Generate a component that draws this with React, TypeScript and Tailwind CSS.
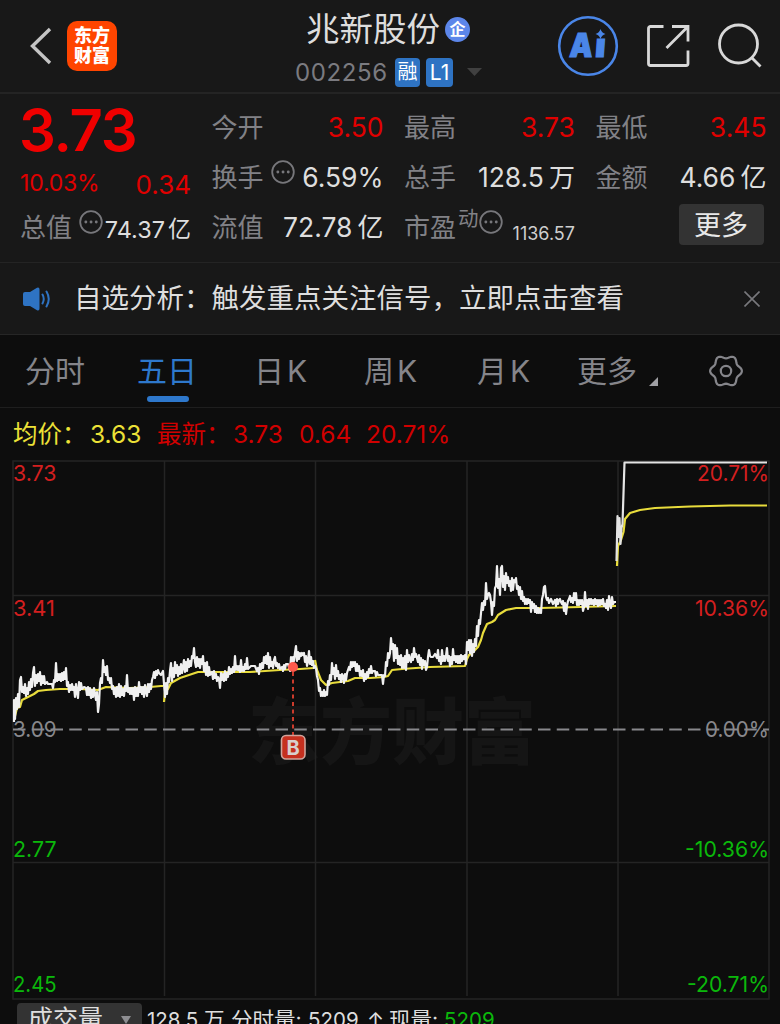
import type { ReactNode } from "react";
import clsx from "clsx";

type Tone = "up" | "plain";

interface QuoteCellProps {
  label: string;
  value: string;
  tone?: Tone;
  unit?: string;
  hint?: boolean;
}

const toneColors: Record<Tone, string> = {
  up: "text-[#e00000]",
  plain: "text-[#dedede]",
};

const tabs = [
  { name: "分时", className: "ml-[25px] w-[61px]" },
  { name: "五日", className: "ml-[51px] w-[61px]", active: true },
  { name: "日", suffix: "K", className: "ml-[56px] w-[54px]" },
  { name: "周", suffix: "K", className: "ml-[56px] w-[54px]" },
  { name: "月", suffix: "K", className: "ml-[59px] w-[54px]" },
  { name: "更多", className: "ml-[46px] w-[61px]" },
];

const axisLabels = [
  { y: 481, price: "3.73", pct: "20.71%", fill: "#d31f1f", width: 72 },
  { y: 616, price: "3.41", pct: "10.36%", fill: "#d31f1f", width: 74 },
  { y: 737, price: "3.09", pct: "0.00%", fill: "#88888c", width: 64 },
  { y: 857, price: "2.77", pct: "-10.36%", fill: "#0bb80b", width: 84 },
  { y: 992, price: "2.45", pct: "-20.71%", fill: "#0bb80b", width: 82 },
];

const priceEarly =
  "14,722 14,700 15,719 16,698 17,709 18,694 19,707 20,680 21,677 22,692 23,687 24,693 25,684 26,696 27,688 28,694 29,682 30,690 31,679 32,687 33,673 34,667 35,686 36,675 37,683 38,674 39,681 40,672 41,685 42,676 43,683 44,676 45,684 47,682 48,684 52,684 53,688 54,680 55,682 56,663 57,681 58,674 59,680 60,674 61,681 62,673 63,680 64,672 65,679 66,668 67,686 68,682 69,692 70,685 71,690 72,684 73,690 74,687 75,697 76,684 77,692 78,698 79,682 80,690 81,683 82,689 84,687 86,688 87,695 88,687 89,695 90,688 91,698 92,690 93,697 94,688 95,694 96,700 97,692 98,712 99,704 100,683 101,678 102,683 103,660 104,672 105,667 106,675 107,666 108,680 109,678 110,683 111,678 112,689 113,686 114,694 115,688 116,697 117,687 118,696 119,684 120,697 121,686 122,695 123,689 124,696 125,686 126,691 127,675 128,692 129,688 130,694 131,688 132,694 133,688 134,700 135,687 136,696 137,688 138,696 139,682 140,692 141,687 142,694 143,687 144,697 145,685 146,692 147,696 148,684 149,692 150,684 151,689 152,680 153,677 154,672 155,678 156,671 157,675 158,670 159,673 161,675 163,671 165,697 166,683 167,694 168,678 169,682 170,671 171,663 172,681 173,668 174,677 175,662 176,673 177,665 178,676 179,667 180,674 181,664 182,673 183,667 184,660 185,672 186,662 187,671 188,659 189,667 190,661 191,666 192,656 193,658 194,648 195,662 196,667 197,657 198,666 199,659 200,668 201,659 202,664 203,656 204,671 205,663 206,675 207,662 208,676 209,667 210,675 212,672 213,679 214,671 215,678 216,674 217,681 218,677 219,679 220,688 221,673 222,680 223,674 224,681 225,671 226,680 227,673 228,677 229,667 230,674 231,669 232,673 233,667 234,672 235,656 236,670 237,666 238,670 239,666 240,672 241,660 242,671 243,667 244,671 245,664 246,669 247,658 248,669 251,666 255,666 257,671 258,668 259,674 260,664 261,669 262,663 263,668 264,657 265,663 266,656 267,664 268,653 269,668 270,657 271,666 272,662 273,668 274,660 275,657 276,666 277,663 278,668 279,664 280,669 281,668 282,667 283,671 284,665 285,669 286,664 288,664 290,671 291,657 292,667 293,657 294,661 295,653 296,646 297,661 298,652 299,659 300,653 301,656 302,653 303,655 304,653 305,662 306,656 307,666 308,661 309,651 310,664 311,657 312,665 313,661 314,668 315,666 316,668";

const priceLate =
  "316,668 317,676 318,680 319,691 320,688 321,696 322,692 323,696 324,690 325,696 326,692 327,695 328,681 329,685 330,675 331,680 332,663 333,674 334,668 335,679 336,665 337,676 338,671 339,679 340,675 341,682 342,674 343,676 344,683 345,674 346,680 347,673 348,670 349,667 350,670 351,662 352,667 353,662 354,666 355,662 356,671 357,664 358,671 359,666 360,676 361,671 362,676 363,670 364,681 365,674 366,679 367,672 368,677 369,669 370,673 371,666 372,673 373,671 375,671 376,676 377,672 378,675 382,675 383,684 384,675 385,676 386,662 387,666 388,653 389,658 390,653 391,638 392,649 393,644 394,661 395,645 396,658 397,648 398,664 399,656 400,665 401,655 402,668 403,658 404,668 405,656 406,670 407,650 408,662 409,655 410,660 411,662 412,654 413,660 414,648 415,657 416,654 417,658 418,662 419,655 420,665 421,658 422,669 423,660 424,665 425,661 426,670 427,667 428,657 429,650 430,656 431,657 433,657 435,654 437,658 438,650 439,661 440,657 441,664 442,650 443,661 444,656 445,661 446,656 447,648 448,661 449,656 450,666 451,657 452,664 453,649 454,660 455,656 456,662 457,656 458,663 459,656 460,663 461,655 462,661 463,656 464,659 465,655 466,664 467,642 468,650 469,640 470,653 471,640 472,656 473,644 474,652 475,639 476,646 477,626 478,636 479,620 480,624 481,613 482,603 483,610 484,601 485,605 486,583 487,599 488,595 489,593 490,595 491,602 492,615 493,602 494,606 495,588 496,586 497,566 498,588 499,579 500,595 501,568 502,566 503,587 504,576 505,590 506,573 507,583 508,577 509,586 510,581 511,591 512,578 513,590 514,580 515,582 516,578 517,589 518,586 519,595 520,587 521,599 522,591 523,601 524,597 525,604 526,599 527,604 528,599 529,603 530,600 531,612 532,602 533,608 534,604 535,612 536,606 537,613 538,608 539,613 540,609 541,613 542,599 543,595 544,587 545,586 546,597 547,600 548,598 549,603 551,599 553,604 555,600 556,606 557,599 558,604 559,600 560,599 561,602 562,604 563,601 564,611 565,603 566,614 567,606 568,601 569,599 570,596 571,602 572,598 573,603 574,593 575,600 576,593 577,605 578,600 579,605 580,600 581,604 582,600 583,611 584,607 585,592 586,606 587,600 588,609 589,599 590,604 591,599 592,604 593,600 594,605 595,599 596,604 597,600 598,606 599,600 600,605 601,600 602,604 603,599 604,606 605,604 606,608 607,600 608,610 609,596 610,604 611,608 612,597 613,604 614,602 616,602";

const priceLimit = "616.5,561 617.5,516 618.5,537 619.5,518 620.5,544 621.5,528 622.5,524 624.5,462.5 767,462.5";

const avgLines = [
  "14,720 17,708 20,707 22,700 28,697 34,694 38,691 46,690 60,689 80,689 98,690 106,687 130,688 150,687 161,686 163,686",
  "164,702 165,692 168,689 171,683 180,678 192,674 198,672 220,672 250,672 280,670 300,669 314,668",
  "315,660 317,670 321,680 326,685 332,683 348,681 355,678 370,678 384,677 388,676 392,670 402,669 430,667 465,666 467,659 469,655 473,652 478,647 481,640 483,633 487,624 492,622 495,620 498,615 506,610 516,608 540,608 580,607 616,606",
  "617,566 618,546 621,540 623.5,532 625,519 630,513 640,510 655,508 690,506.5 730,505.5 767,505.5",
];

// six soft lobes around (18, 17)
const gearPoints = Array.from({ length: 72 }, (_, i) => {
  const a = (i * Math.PI) / 36;
  const r = 14.3 + 1.6 * Math.cos(6 * a);
  return `${(18 + r * Math.cos(a)).toFixed(2)},${(17 + r * Math.sin(a)).toFixed(2)}`;
}).join(" ");

function Dots({ className }: { className?: string }) {
  return (
    <svg viewBox="0 0 24 24" className={clsx("size-6 shrink-0", className)} fill="none" stroke="#77777b">
      <circle cx="12" cy="12" r="10.8" strokeWidth="1.8" />
      <path d="M6.8 12h.1M12 12h.1M17.2 12h.1" strokeWidth="2.8" strokeLinecap="round" />
    </svg>
  );
}

function Label({ children }: { children: ReactNode }) {
  return <span className="text-[26px] text-[#818186]">{children}</span>;
}

function QuoteCell({ label, value, tone = "plain", unit, hint }: QuoteCellProps) {
  return (
    <div className="flex h-[50px] items-center whitespace-nowrap">
      <Label>{label}</Label>
      {hint && <Dots className="ml-[7px] -mt-2.5" />}
      <span className={clsx("ml-auto pt-0.5 text-[26.5px]", toneColors[tone])}>{value}</span>
      {unit && <span className="ml-[5px] text-[26px] text-[#dedede]">{unit}</span>}
    </div>
  );
}

function Header() {
  return (
    <header className="flex h-[94px] shrink-0 items-center border-b-2 border-[#242424] bg-[#181818]">
      <svg viewBox="0 0 24 40" className="ml-[29px] h-10 w-6" fill="none" stroke="#c4c4c4" strokeWidth="3.4">
        <path d="M21 3 3.5 20 21 37" />
      </svg>
      <div className="ml-3.5 flex h-[50px] w-[50px] flex-col items-center justify-center rounded-[10px] bg-[#ff4500] text-[18px] leading-[20px] font-black text-white">
        <span>东方</span>
        <span>财富</span>
      </div>
      <div className="ml-[178px] flex w-[190px] flex-col pt-1.5">
        <div className="flex h-[44px] items-center pl-[11px]">
          <span className="text-[33.5px] leading-[44px] text-[#dddddd]">兆新股份</span>
          <span className="ml-[5px] flex size-[25px] items-center justify-center rounded-full bg-[#5c86ea] text-[16px] leading-none font-bold text-white">
            企
          </span>
        </div>
        <div className="flex h-[40px] items-center">
          <span className="w-[100px] pt-[3px] text-[24px] tracking-[0.6px] text-[#7b7b80]">002256</span>
          <span className="mt-0.5 flex h-[29px] w-[25px] items-center justify-center rounded bg-[#2e73c3] text-[20px] text-white">
            融
          </span>
          <span className="mt-0.5 ml-1.5 flex h-[29px] w-[27px] items-center justify-center rounded bg-[#2e73c3] pt-0.5 text-[21px] text-white">
            L1
          </span>
          <svg viewBox="0 0 15 8" className="mt-0.5 ml-3.5 h-2 w-[15px]">
            <path d="M0 0h15L7.5 8z" fill="#404040" />
          </svg>
        </div>
      </div>
      <svg viewBox="0 0 62 62" className="ml-[72px] size-[62px]" fill="#4a86e8">
        <circle cx="31" cy="31" r="28.8" fill="none" stroke="#4a86e8" strokeWidth="2.6" />
        <g fontSize="33" fontWeight="900" stroke="#4a86e8" strokeWidth="1.2" transform="translate(0 42) skewX(-4)">
          <text x="12" y="0" textLength="23" lengthAdjust="spacingAndGlyphs">
            A
          </text>
          <text x="37.500" y="0" textLength="10.500" lengthAdjust="spacingAndGlyphs">
            ı
          </text>
        </g>
        <path d="M43.500 14q1.200 4 5 5-3.800 1-5 5-1.200-4-5-5 3.800-1 5-5z" />
      </svg>
      <svg viewBox="0 0 44 44" className="ml-[27px] size-11" fill="none" stroke="#d8d8d8" strokeWidth="2.8">
        <path d="M17.500 2.500H4.500a2 2 0 0 0-2 2v35a2 2 0 0 0 2 2h35.500a2 2 0 0 0 2-2V26.500" />
        <path d="M26 2.500h16v15M42 2.500 20.500 24" />
      </svg>
      <svg viewBox="0 0 46 46" className="ml-[27px] size-[46px]" fill="none" stroke="#d8d8d8" strokeWidth="2.8">
        <circle cx="21.500" cy="21" r="19" />
        <path d="M34.500 34.500 43.500 43.500" />
      </svg>
    </header>
  );
}

function QuotePanel() {
  return (
    <section className="grid h-[169px] shrink-0 grid-cols-[171px_172px_171px_171px] gap-x-[20.5px] border-b border-[#242424] bg-[#181818] pt-[8px] pl-5">
      <div>
        <div className="-ml-px flex h-[56px] items-center text-[58px] leading-none font-semibold tracking-[-1.2px] text-[#f00000]">
          3.73
        </div>
        <div className="flex h-[50px] items-center justify-between text-[#e00000]">
          <span className="text-[23px] tracking-[-0.2px]">10.03%</span>
          <span className="pt-0.5 text-[26px]">0.34</span>
        </div>
        <div className="-mt-[6px] flex h-[50px] items-center whitespace-nowrap">
          <Label>总值</Label>
          <Dots className="ml-[7px] -mt-2.5" />
          <span className="ml-auto pt-1.5 text-[23.5px] text-[#dedede]">74.37</span>
          <span className="ml-[3px] pt-1 text-[23px] text-[#dedede]">亿</span>
        </div>
      </div>
      <div>
        <QuoteCell label="今开" value="3.50" tone="up" />
        <QuoteCell label="换手" value="6.59%" hint />
        <QuoteCell label="流值" value="72.78" unit="亿" />
      </div>
      <div>
        <QuoteCell label="最高" value="3.73" tone="up" />
        <QuoteCell label="总手" value="128.5" unit="万" />
        <div className="flex h-[50px] items-center whitespace-nowrap">
          <Label>市盈</Label>
          <span className="-mt-4 ml-0.5 text-[20.5px] text-[#818186]">动</span>
          <Dots className="-mt-2.5" />
          <span className="ml-auto pt-3 text-[18px] text-[#cfcfcf]">1136.57</span>
        </div>
      </div>
      <div>
        <QuoteCell label="最低" value="3.45" tone="up" />
        <QuoteCell label="金额" value="4.66" unit="亿" />
        <div className="flex h-[44px] items-center justify-end pr-[3px]">
          <button className="mt-px flex h-[41px] w-[85px] items-center justify-center rounded bg-[#333333] pt-1 text-[27px] text-[#e8e8e8]">
            更多
          </button>
        </div>
      </div>
    </section>
  );
}

function Notice() {
  return (
    <section className="flex h-[72px] shrink-0 items-center border-b border-[#262626] bg-[#181818]">
      <svg viewBox="0 0 28 24" className="ml-[23px] h-6 w-7" fill="#2e73c3">
        <path d="M2 5h5L14 .8Q16.500 0 16.500 2.500v19q0 2.500-2.500 1.700L7 19H2Q0 19 0 17V7q0-2 2-2z" />
        <path d="M19.500 7.500q2.500 4.500 0 9M23.500 4.500q4.500 7.500 0 15" fill="none" stroke="#2e73c3" strokeWidth="2" strokeLinecap="round" />
      </svg>
      <span className="ml-[23px] text-[27.5px] whitespace-nowrap text-[#dedede]">
        自选分析：触发重点关注信号，立即点击查看
      </span>
      <svg viewBox="0 0 16 16" className="mr-5 ml-auto size-4" stroke="#78787c" strokeWidth="1.600">
        <path d="M.5.500l15 15M15.500.500l-15 15" />
      </svg>
    </section>
  );
}

function TabBar() {
  return (
    <nav className="flex h-[73px] shrink-0 items-center border-b border-[#1e1e1e] bg-[#0d0d0d]">
      {tabs.map((tab) => (
        <div
          key={tab.name}
          className={clsx(
            "relative flex h-full items-center text-[30px] whitespace-nowrap",
            tab.className,
            tab.active ? "text-[#2e78cc]" : "text-[#85858a]",
          )}
        >
          {tab.name}
          {tab.suffix && <span className="ml-[3px]">{tab.suffix}</span>}
          {tab.active && <span className="absolute bottom-[5px] left-[10px] h-1.5 w-[42px] rounded-full bg-[#2e78cc]" />}
        </div>
      ))}
      <svg viewBox="0 0 9 9" className="mt-[20px] ml-[11px] size-[9px]">
        <path d="M9 0v9H0z" fill="#a0a0a4" />
      </svg>
      <svg viewBox="0 0 36 34" className="ml-[50px] h-[34px] w-9" fill="none" stroke="#85858a" strokeWidth="2.2" strokeLinejoin="round">
        <polygon points={gearPoints} />
        <circle cx="18" cy="17" r="5.200" />
      </svg>
    </nav>
  );
}

function Legend() {
  return (
    <div className="flex h-[52px] shrink-0 items-center pl-[13px] text-[24.5px] whitespace-nowrap text-[#d00000]">
      <span className="w-[77px] text-[#ece137]">均价：</span>
      <span className="w-[67px] text-[#ece137]">3.63</span>
      <span className="w-[76px]">最新：</span>
      <span className="w-[66px]">3.73</span>
      <span className="w-[67px]">0.64</span>
      <span>20.71%</span>
    </div>
  );
}

function Chart() {
  return (
    <svg viewBox="0 460 780 540" className="h-[540px] w-[780px] shrink-0">
      <text x="248" y="758" fontSize="72" fontWeight="900" fill="#151515">
        东方财富
      </text>
      <g stroke="#242424" strokeWidth="1.5" fill="none">
        <path d="M13 461H769V999H13zM13 595.500H769M13 862.500H769" />
        <path d="M164.500 461V996M315.500 461V996M467 461V996M618 461V996" />
      </g>
      <path d="M13 729.500H769" stroke="#88888c" strokeWidth="2" strokeDasharray="12.500 6.250" />
      {axisLabels.map((label) => (
        <g key={label.price} fontSize="22" fill={label.fill}>
          <text x="13" y={label.y} textLength={label.price === "3.41" ? 42 : 43.5} lengthAdjust="spacingAndGlyphs">
            {label.price}
          </text>
          <text x={769 - label.width} y={label.y} textLength={label.width} lengthAdjust="spacingAndGlyphs">
            {label.pct}
          </text>
        </g>
      ))}
      <g fill="none" strokeLinejoin="round">
        {avgLines.map((points) => (
          <polyline key={points} points={points} stroke="#e8dc3c" strokeWidth="2.200" />
        ))}
        <polyline points={priceEarly} stroke="#f0f0f0" strokeWidth="2.200" />
        <polyline points={priceLate} stroke="#f0f0f0" strokeWidth="2.200" />
        <polyline points={priceLimit} stroke="#e4e4e4" strokeWidth="2.200" />
      </g>
      <path d="M293 672V735" stroke="#cc3b2c" strokeWidth="2" strokeDasharray="4 3.500" />
      <circle cx="293" cy="667" r="5" fill="#ff5a4c" />
      <rect x="281.500" y="735.500" width="23.500" height="23.500" rx="4.500" fill="#c5301f" stroke="#d0a49c" strokeWidth="1.600" />
      <text x="293.200" y="754.500" fontSize="20" fontWeight="700" fill="#d8cfcd" textAnchor="middle">
        B
      </text>
    </svg>
  );
}

function VolumeBar() {
  return (
    <div className="flex h-10 shrink-0 items-start pt-[3px] pl-[17px] text-[20.5px] whitespace-nowrap text-[#dedede]">
      <div className="flex h-[34px] w-[125px] items-center rounded bg-[#333333] pl-[11px] text-[25px]">
        成交量
        <svg viewBox="0 0 10 8" className="ml-[18px] h-2 w-2.5">
          <path d="M0 0h10L5 8z" fill="#8e8e92" />
        </svg>
      </div>
      <div className="ml-[5px] flex leading-[34px]">
        <span className="w-[84px]">128.5 万</span>
        <span className="w-[77px] text-[21.500px]">分时量:</span>
        <span className="w-[59px]">5209</span>
        <span className="w-[22px]">↑</span>
        <span className="w-[55px] text-[21.500px]">现量:</span>
        <span className="text-[#0bb80b]">5209</span>
      </div>
    </div>
  );
}

export default function App() {
  return (
    <main className="flex h-[1024px] w-[780px] flex-col overflow-hidden bg-[#0d0d0d] font-['Inter','Noto_Sans_CJK_SC',sans-serif]">
      <Header />
      <QuotePanel />
      <Notice />
      <TabBar />
      <Legend />
      <Chart />
      <VolumeBar />
    </main>
  );
}
